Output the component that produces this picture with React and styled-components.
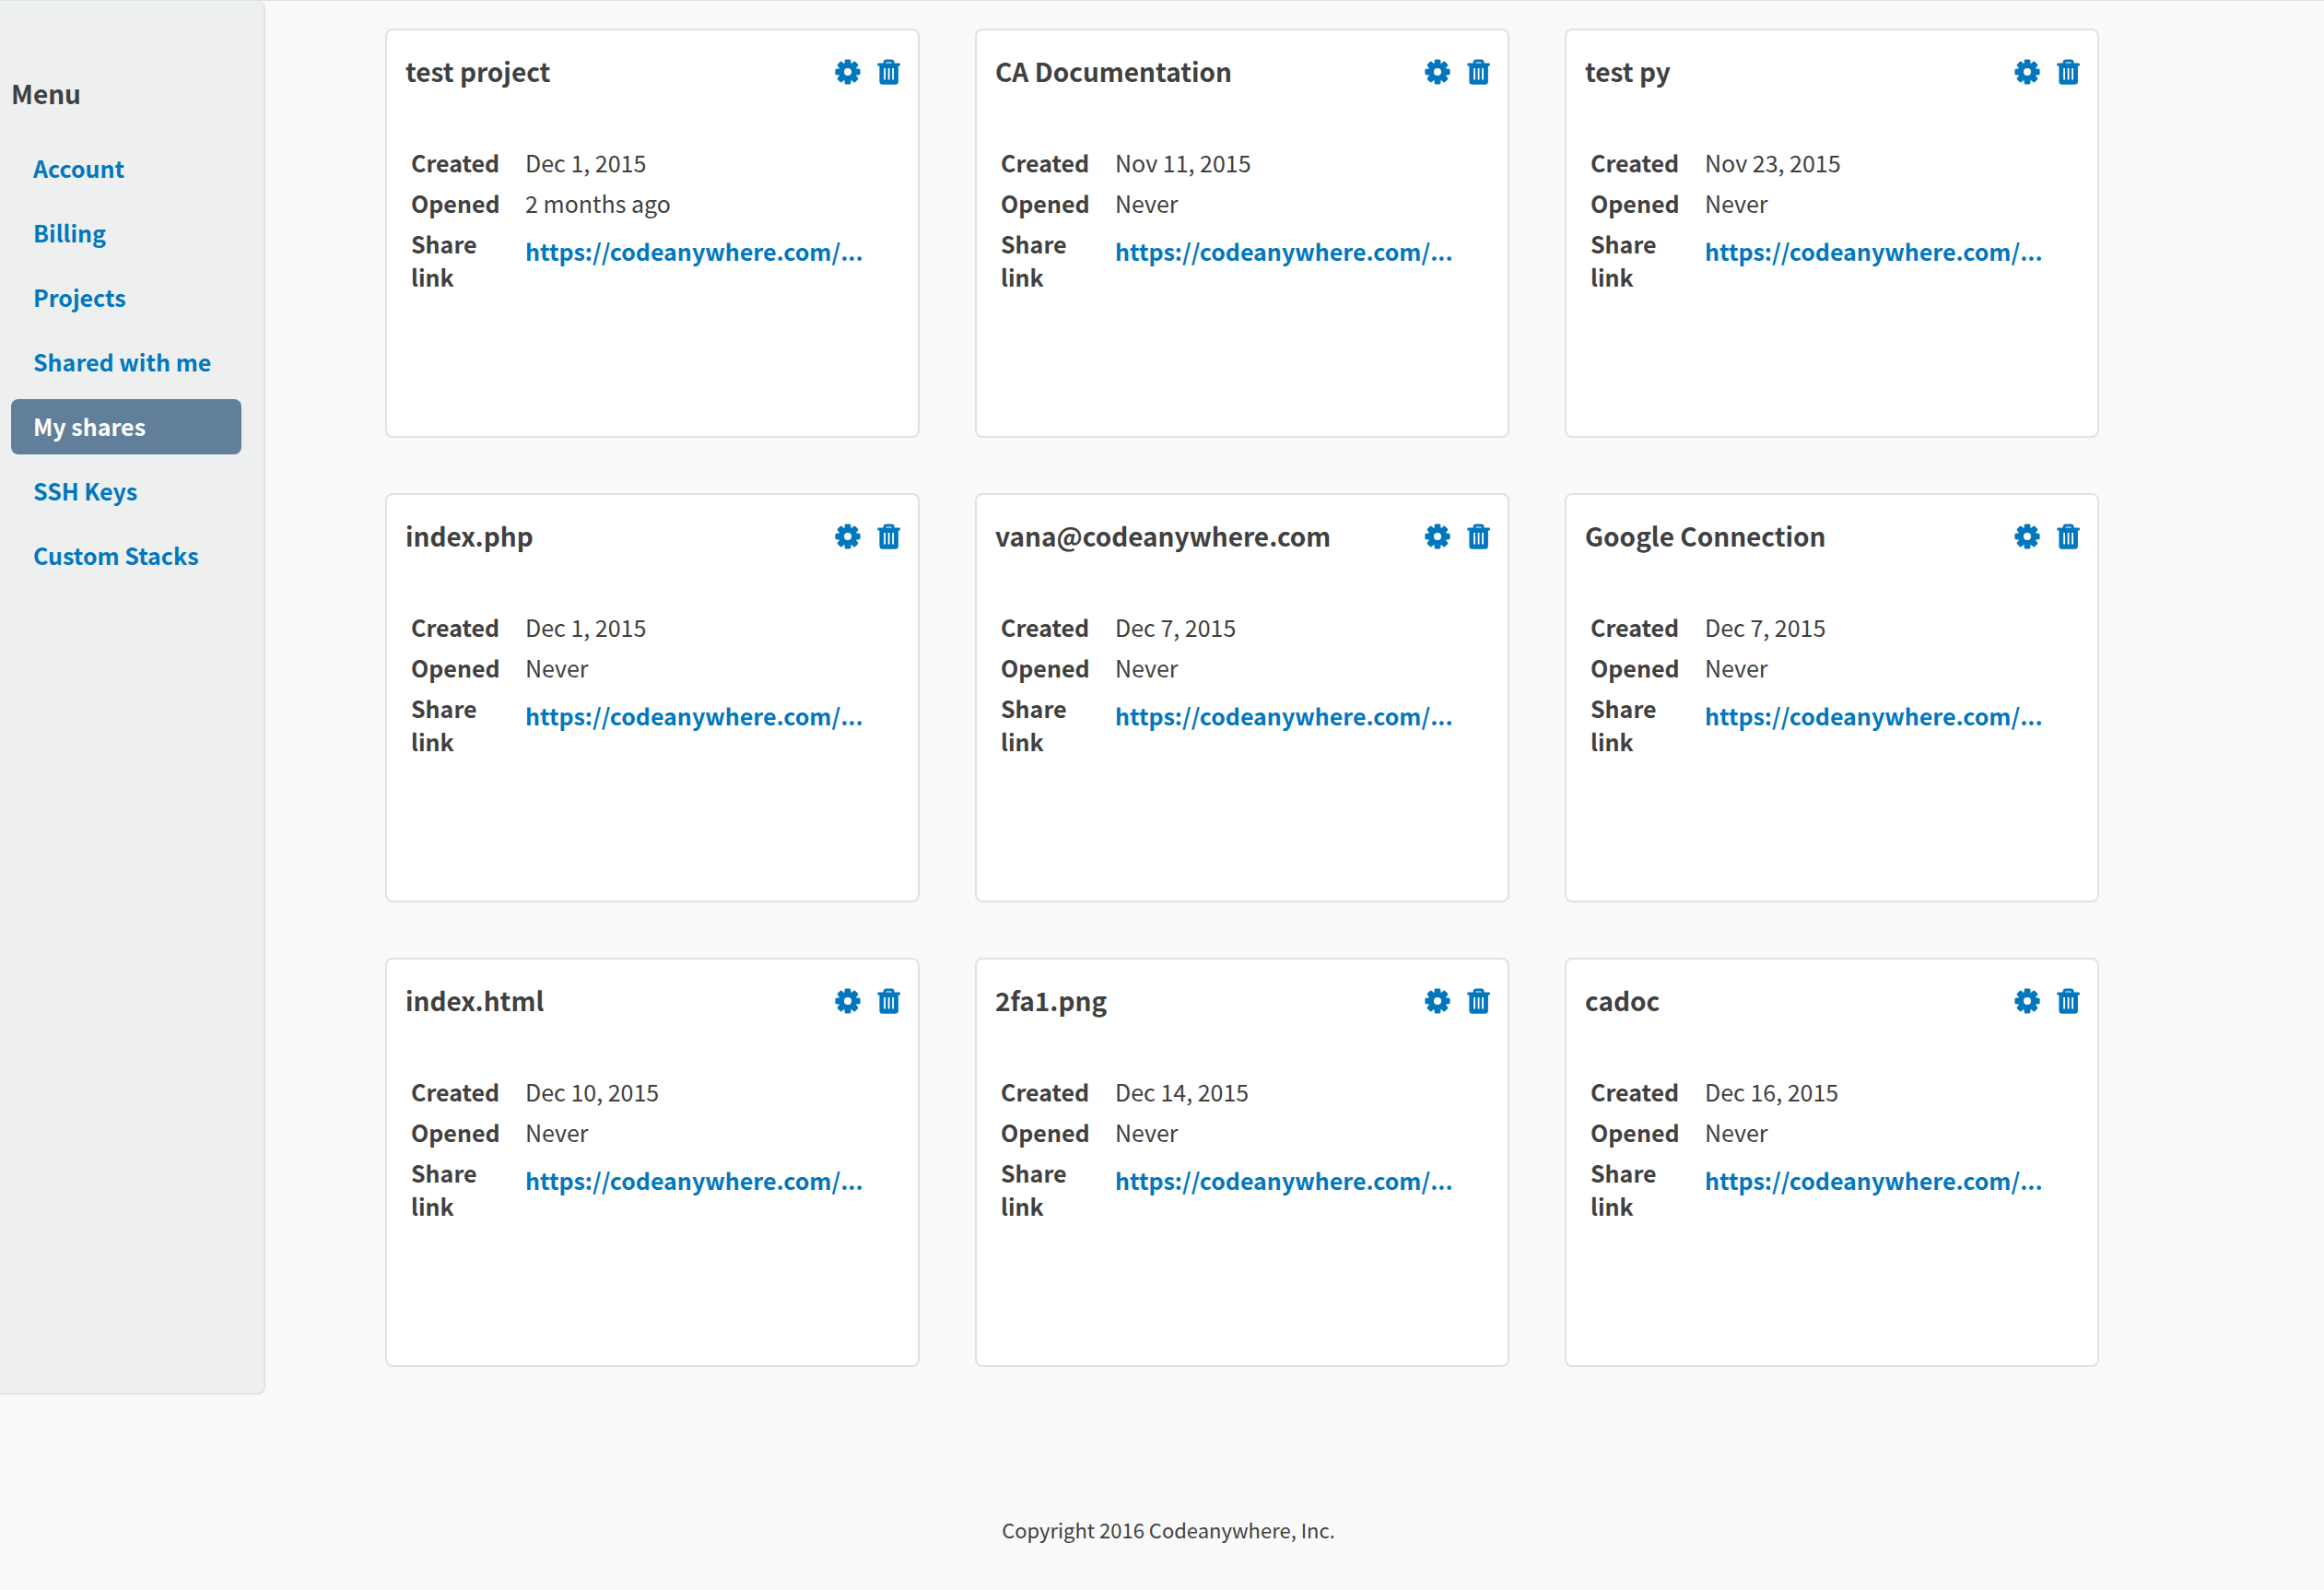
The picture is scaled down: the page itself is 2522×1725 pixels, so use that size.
import React from "react";
import styled, { createGlobalStyle } from "styled-components";

const color = {
  page: "#f9f9f9",
  panel: "#eef0f0",
  line: "#dfe3e2",
  text: "#404040",
  link: "#0277bd",
  active: "#617f9b",
};

const GlobalStyle = createGlobalStyle`
  *, *::before, *::after { box-sizing: border-box; }
  body {
    margin: 0;
    background: ${color.page};
    color: ${color.text};
    font-family: "Noto Sans CJK SC", "Noto Sans", sans-serif;
    font-size: 25px;
    line-height: 36px;
  }
`;

const Page = styled.div`
  display: flex;
  flex-direction: column;
  min-height: 100vh;
  border-top: 1px solid ${color.line};
`;

const Columns = styled.div`
  display: flex;
  align-items: stretch;
`;

const Sidebar = styled.aside`
  flex: 0 0 288px;
  padding: 80px 24px 0 12px;
  background: ${color.panel};
  border: 2px solid ${color.line};
  border-width: 0 2px 2px 0;
  border-radius: 0 8px 8px 0;
`;

const MenuTitle = styled.h2`
  margin: 0 0 32px;
  font-size: 28px;
  font-weight: 700;
  line-height: 40px;
`;

const MenuList = styled.ul`
  display: flex;
  flex-direction: column;
  gap: 10px;
  margin: 0;
  padding: 0;
  list-style: none;
`;

const MenuLink = styled.a`
  display: block;
  padding: 11px 24px 13px;
  border-radius: 8px;
  background: ${(p) => (p.$active ? color.active : "transparent")};
  color: ${(p) => (p.$active ? "#fff" : color.link)};
  font-weight: 700;
  text-decoration: none;
  white-space: nowrap;
`;

const Shares = styled.main`
  flex: 1;
  display: grid;
  grid-template-columns: repeat(3, minmax(0, 1fr));
  gap: 60px;
  padding: 30px 244px 30px 130px;
`;

const Card = styled.article`
  min-height: 444px;
  padding: 24px 18px 24px 20px;
  background: #fff;
  border: 2px solid ${color.line};
  border-radius: 8px;
`;

const CardHeader = styled.header`
  display: flex;
  align-items: center;
  justify-content: space-between;
  margin-bottom: 55px;
`;

const CardTitle = styled.h3`
  margin: 0;
  padding-bottom: 2px;
  font-size: 28px;
  font-weight: 700;
  line-height: 40px;
`;

const Actions = styled.div`
  display: flex;
  gap: 18px;
`;

const IconButton = styled.button`
  display: flex;
  padding: 0;
  border: 0;
  background: none;
  color: ${color.link};
  cursor: pointer;
`;

const Details = styled.table`
  width: 100%;
  border-collapse: collapse;
  table-layout: fixed;
`;

const Label = styled.th`
  width: 124px;
  padding: 4px 20px 4px 6px;
  font-weight: 700;
  text-align: left;
  vertical-align: top;
`;

const Value = styled.td`
  padding: ${(p) => (p.$link ? "12px" : "4px")} 6px 4px;
  vertical-align: top;
`;

const ShareLink = styled.a`
  color: ${color.link};
  font-weight: 700;
  text-decoration: none;
  white-space: nowrap;
`;

const Footer = styled.footer`
  padding: 128px 0 44px 14px;
  font-size: 22px;
  text-align: center;
`;

const GearIcon = () => (
  <svg width="28" height="28" viewBox="-14 -14 28 28" fill="currentColor" aria-hidden="true">
    <defs>
      <mask id="gear-hole">
        <rect x="-14" y="-14" width="28" height="28" fill="#fff" />
        <circle r="4" fill="#000" />
      </mask>
    </defs>
    <g mask="url(#gear-hole)">
      <circle r="9.6" />
      {[0, 45, 90, 135].map((angle) => (
        <path
          key={angle}
          transform={`rotate(${angle})`}
          d="M-2-13.6H2q1 0 1.200 1L3.700-8V8l-.5 4.600q-.2 1-1.200 1H-2q-1 0-1.200-1L-3.700 8V-8l.5-4.600q.2-1 1.200-1z"
        />
      ))}
    </g>
  </svg>
);

const TrashIcon = () => (
  <svg width="26" height="28" viewBox="0 0 26 28" fill="currentColor" aria-hidden="true">
    <path
      fillRule="evenodd"
      d="M6.600 4.600V4Q6.600.6 10 .6h5.200Q18.600.6 18.600 4v.6H24q.9 0 .9.9v1.200q0 .9-.9.9h-1.100v16.600q0 3.600-3.400 3.600H5.800q-3.400 0-3.400-3.600V7.600H1.200q-.9 0-.9-.9V5.500q0-.9.9-.9zM9.200 4.600H16q0-1.200-1.200-1.200h-4.400q-1.200 0-1.200 1.200zM7.200 10v12.600H9V10zM11.700 10v12.600h1.800V10zM16.200 10v12.600H18V10z"
    />
  </svg>
);

const menu = [
  "Account",
  "Billing",
  "Projects",
  "Shared with me",
  "My shares",
  "SSH Keys",
  "Custom Stacks",
];

const shares = [
  { name: "test project", created: "Dec 1, 2015", opened: "2 months ago" },
  { name: "CA Documentation", created: "Nov 11, 2015", opened: "Never" },
  { name: "test py", created: "Nov 23, 2015", opened: "Never" },
  { name: "index.php", created: "Dec 1, 2015", opened: "Never" },
  { name: "vana@codeanywhere.com", created: "Dec 7, 2015", opened: "Never" },
  { name: "Google Connection", created: "Dec 7, 2015", opened: "Never" },
  { name: "index.html", created: "Dec 10, 2015", opened: "Never" },
  { name: "2fa1.png", created: "Dec 14, 2015", opened: "Never" },
  { name: "cadoc", created: "Dec 16, 2015", opened: "Never" },
];

const ShareCard = ({ share }) => (
  <Card>
    <CardHeader>
      <CardTitle>{share.name}</CardTitle>
      <Actions>
        <IconButton type="button" aria-label="Settings">
          <GearIcon />
        </IconButton>
        <IconButton type="button" aria-label="Delete">
          <TrashIcon />
        </IconButton>
      </Actions>
    </CardHeader>
    <Details>
      <tbody>
        <tr>
          <Label scope="row">Created</Label>
          <Value>{share.created}</Value>
        </tr>
        <tr>
          <Label scope="row">Opened</Label>
          <Value>{share.opened}</Value>
        </tr>
        <tr>
          <Label scope="row">Share link</Label>
          <Value $link>
            <ShareLink href="#">https://codeanywhere.com/...</ShareLink>
          </Value>
        </tr>
      </tbody>
    </Details>
  </Card>
);

export default function App() {
  return (
    <Page>
      <GlobalStyle />
      <Columns>
        <Sidebar>
          <MenuTitle>Menu</MenuTitle>
          <nav aria-label="Menu">
            <MenuList>
              {menu.map((item) => (
                <li key={item}>
                  <MenuLink href="#" $active={item === "My shares"}>
                    {item}
                  </MenuLink>
                </li>
              ))}
            </MenuList>
          </nav>
        </Sidebar>
        <Shares>
          {shares.map((share) => (
            <ShareCard key={share.name} share={share} />
          ))}
        </Shares>
      </Columns>
      <Footer>Copyright 2016 Codeanywhere, Inc.</Footer>
    </Page>
  );
}
